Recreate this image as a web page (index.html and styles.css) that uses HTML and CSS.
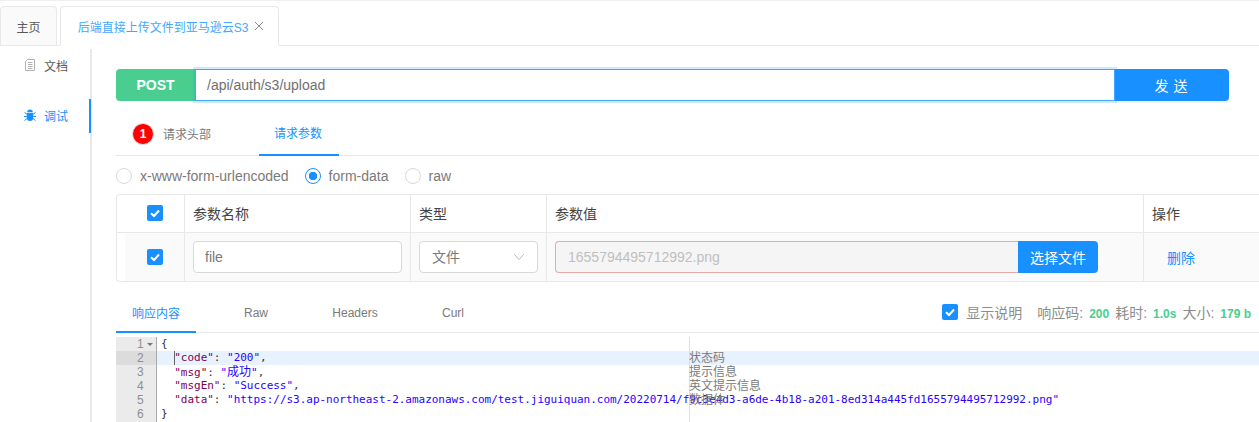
FILE: index.html
```html
<!DOCTYPE html>
<html lang="zh">
<head>
<meta charset="utf-8">
<title>后端直接上传文件到亚马逊云S3</title>
<link rel="stylesheet" href="styles.css">
</head>
<body>
<header class="tabbar">
  <div class="page-tab">主页</div>
  <div class="page-tab active"><span>后端直接上传文件到亚马逊云S3</span>
    <svg class="close" viewBox="0 0 10 10" width="10" height="10"><path d="M1 1l8 8M9 1l-8 8" stroke="#888" stroke-width="1" fill="none"/></svg>
  </div>
</header>
<div class="layout">
  <nav class="side">
    <div class="side-item">
      <svg viewBox="0 0 10 12" width="10" height="12"><path d="M2.500.5h7v11h-9v-9zM3 3.500h4.500M3 5.500h4.500M3 7.500h4.500M3 9.500h4.500" fill="none" stroke="#b0b0b0" stroke-width="1"/></svg>
      <span>文档</span>
    </div>
    <div class="side-item current">
      <svg viewBox="0 0 12 12" width="12" height="12"><path d="M3.200 3.200a2.800 2.700 0 0 1 5.600 0z" fill="#1890ff"/><path d="M2.800 4h6.400v4.500a3.200 3.500 0 0 1-6.400 0z" fill="#1890ff"/><path d="M.5 3.500l2.300 1.500M11.500 3.500L9.200 5M0 7.500h2.800M12 7.500H9.200M.5 11.500l2.500-2M11.500 11.500l-2.500-2" stroke="#1890ff" stroke-width="1" fill="none"/></svg>
      <span>调试</span>
    </div>
  </nav>
  <main class="main">
    <div class="urlbar">
      <div class="method">POST</div>
      <div class="url">/api/auth/s3/upload</div>
      <button class="send">发 送</button>
    </div>

    <div class="tabs req-tabs">
      <div class="tab first"><span class="badge">1</span>请求头部</div>
      <div class="tab on">请求参数</div>
    </div>

    <div class="radios">
      <label class="radio"><i class="dot"></i>x-www-form-urlencoded</label>
      <label class="radio"><i class="dot sel"></i>form-data</label>
      <label class="radio"><i class="dot"></i>raw</label>
    </div>

    <div class="table">
      <div class="row head">
        <div class="cell c0"><i class="check"><svg viewBox="0 0 16 16" width="16" height="16"><path d="M4 8.200l3 2.800 5-5.500" fill="none" stroke="#fff" stroke-width="2"/></svg></i></div>
        <div class="cell c1">参数名称</div>
        <div class="cell c2">类型</div>
        <div class="cell c3">参数值</div>
        <div class="cell c4">操作</div>
      </div>
      <div class="row body">
        <div class="cell c0"><i class="check"><svg viewBox="0 0 16 16" width="16" height="16"><path d="M4 8.200l3 2.800 5-5.500" fill="none" stroke="#fff" stroke-width="2"/></svg></i></div>
        <div class="cell c1"><div class="field">file</div></div>
        <div class="cell c2"><div class="field select">文件
          <svg viewBox="0 0 12 8" width="12" height="8"><path d="M1 1l5 5.500L11 1" fill="none" stroke="#bbb" stroke-width="1"/></svg></div></div>
        <div class="cell c3"><div class="upload"><div class="filename">1655794495712992.png</div><button class="pick">选择文件</button></div></div>
        <div class="cell c4"><a class="del">删除</a></div>
      </div>
    </div>

    <div class="tabs res-tabs">
      <div class="tab on">响应内容</div>
      <div class="tab">Raw</div>
      <div class="tab">Headers</div>
      <div class="tab">Curl</div>
      <div class="stats">
        <i class="check"><svg viewBox="0 0 16 16" width="16" height="16"><path d="M4 8.200l3 2.800 5-5.500" fill="none" stroke="#fff" stroke-width="2"/></svg></i>
        <span class="show">显示说明</span>
        <span>响应码:</span><b>200</b><span>耗时:</span><b>1.0s</b><span>大小:</span><b>179 b</b>
      </div>
    </div>

    <div class="editor">
      <div class="gutter">
        <div class="num">1<i class="fold"></i></div>
        <div class="num cur">2</div>
        <div class="num">3</div>
        <div class="num">4</div>
        <div class="num">5</div>
        <div class="num">6</div>
      </div>
      <div class="code">
        <div class="ln">{</div>
        <div class="ln hl">  <i class="caret"></i><s>"code"</s>: <u>"200"</u>,</div>
        <div class="ln">  <s>"msg"</s>: <u>"<em>成功</em>"</u>,</div>
        <div class="ln">  <s>"msgEn"</s>: <u>"Success"</u>,</div>
        <div class="ln">  <s>"data"</s>: <u>"https://s3.ap-northeast-2.amazonaws.com/test.jiguiquan.com/20220714/f9c3e4d3-a6de-4b18-a201-8ed314a445fd1655794495712992.png"</u></div>
        <div class="ln">}</div>
      </div>
      <div class="notes">
        <div>状态码</div>
        <div>提示信息</div>
        <div>英文提示信息</div>
        <div>数据体</div>
      </div>
    </div>
  </main>
</div>
</body>
</html>
```

FILE: styles.css
```css
* { box-sizing: border-box; }
html, body { margin: 0; height: 100%; overflow: hidden; }
body {
  background: #fff;
  color: #595959;
  font: 12px "Liberation Sans", "Noto Sans CJK SC", sans-serif;
}
i, em { font-style: normal; }

.tabbar {
  height: 46px;
  border-top: 1px solid #f0f0f0;
  border-bottom: 1px solid #e8e8e8;
  padding-top: 5px;
  display: flex;
  gap: 3px;
}
.page-tab {
  height: 40px;
  width: 57px;
  background: #fafafa;
  border: 1px solid #e8e8e8;
  border-radius: 4px 4px 0 0;
  display: flex;
  align-items: center;
  justify-content: center;
  color: #595959;
}
.page-tab.active {
  width: 219px;
  background: #fff;
  border-bottom-color: #fff;
  color: #40a9ff;
  gap: 6px;
  padding-left: 3px;
}
.layout { display: flex; height: 376px; }

.side {
  width: 92px;
  margin-top: 3px;
  border-right: 2px solid #e8e8e8;
  flex: none;
}
.side-item {
  height: 34px;
  margin-right: -1px;
  display: flex;
  align-items: center;
  padding: 0 0 2px 25px;
  gap: 9px;
  color: #595959;
  margin-bottom: 16px;
}
.side-item span { width: 30px; }
.side-item.current {
  color: #1890ff;
  border-right: 2px solid #1890ff;
  padding-left: 24px;
  gap: 8px;
}

.main { flex: 1; min-width: 0; padding: 23px 0 0 24px; }
.urlbar { display: flex; height: 32px; width: 1113px; }
.method {
  width: 79px;
  background: #49ce8f;
  color: #fff;
  font-size: 14px;
  font-weight: 700;
  border-radius: 4px 0 0 4px;
  display: flex;
  align-items: center;
  justify-content: center;
}
.url {
  flex: 1;
  border: 1px solid #40a9ff;
  box-shadow: 0 0 0 2px rgba(24, 144, 255, .2);
  font-size: 14px;
  color: #707070;
  padding-left: 11px;
  line-height: 30px;
  position: relative;
  z-index: 1;
}
.send {
  width: 114px;
  border: 0;
  background: #1890ff;
  color: #fff;
  font: 14px "Liberation Sans", "Noto Sans CJK SC", sans-serif;
  border-radius: 0 4px 4px 0;
  box-shadow: 0 2px 0 rgba(0, 0, 0, .045);
  word-spacing: 1px;
  padding: 0 8px 0 6px;
}

.tabs { display: flex; border-bottom: 1px solid #e8e8e8; }
.tab {
  display: flex;
  align-items: center;
  justify-content: center;
  color: #7a7a7a;
  margin-bottom: -1px;
}
.tab.on { color: #1890ff; border-bottom: 2px solid #1890ff; }

.req-tabs { margin-top: 14px; height: 41px; }
.req-tabs .tab { height: 41px; padding-bottom: 4px; }
.req-tabs .first { width: 143px; justify-content: flex-start; padding-left: 16px; gap: 9px; }
.req-tabs .on { width: 80px; padding-right: 2px; }
.badge {
  width: 22px;
  height: 22px;
  border-radius: 50%;
  background: #f00;
  border: 1px solid #ddd;
  color: #fff;
  font-size: 12px;
  font-weight: 700;
  display: flex;
  align-items: center;
  justify-content: center;
}

.radios {
  height: 38px;
  display: flex;
  align-items: center;
  gap: 16px;
  font-size: 14px;
  color: #7a7a7a;
  padding-top: 1px;
}
.radio { display: flex; align-items: center; gap: 8px; }
.dot {
  width: 16px;
  height: 16px;
  border: 1px solid #d9d9d9;
  border-radius: 50%;
  display: block;
}
.dot.sel {
  border-color: #1890ff;
  background: radial-gradient(circle, #1890ff 0 4px, #fff 4.500px);
}

.table {
  border: 1px solid #e8e8e8;
  border-right: 0;
  border-radius: 4px 0 0 4px;
  height: 88px;
  color: #444;
}
.row { display: flex; }
.head { height: 38px; border-bottom: 1px solid #e8e8e8; }
.body { height: 48px; color: #7a7a7a; }
.cell {
  display: flex;
  align-items: center;
  padding-left: 8px;
  border-right: 1px solid #e8e8e8;
  font-size: 14px;
  flex: none;
}
.body .cell { background: #fafafa; }
.head .cell { padding: 0 0 2px 8px; }
.c1 { width: 226px; }
.c2 { width: 136px; }
.c3 { width: 597px; }
.c4 { width: 116px; border-right: 0; }
.head .c0 { width: 68px; padding-left: 30px; }
.body .c0 { width: 60px; margin-left: 8px; padding-left: 22px; }
.check {
  width: 16px;
  height: 16px;
  background: #1890ff;
  border-radius: 2px;
  display: block;
  flex: none;
}
.check svg { display: block; }
.field {
  height: 32px;
  border: 1px solid #d9d9d9;
  border-radius: 4px;
  background: #fff;
  font-size: 14px;
  color: #7a7a7a;
  padding-left: 11px;
  line-height: 30px;
}
.c1 .field { width: 209px; }
.select { width: 119px; display: flex; align-items: center; justify-content: space-between; padding: 0 12px; }
.upload { display: flex; width: 543px; height: 32px; }
.filename {
  flex: 1;
  background: #f5f5f5;
  border: 1px solid #e8a9a9;
  border-right: 0;
  border-radius: 4px 0 0 4px;
  color: #bfbfbf;
  font-size: 14px;
  line-height: 30px;
  padding-left: 12px;
}
.pick {
  width: 80px;
  background: #1890ff;
  color: #fff;
  border: 0;
  border-radius: 0 4px 4px 0;
  font: 14px "Liberation Sans", "Noto Sans CJK SC", sans-serif;
  padding: 0;
}
.c4 .del { color: #1890ff; margin-left: 15px; }

.res-tabs { margin-top: 13px; height: 38px; }
.res-tabs .tab { height: 38px; width: 80px; padding-bottom: 2px; }
.res-tabs .tab:nth-child(2) { width: 120px; }
.res-tabs .tab:nth-child(3) { width: 62px; margin-left: 8px; }
.res-tabs .tab:nth-child(4) { width: 38px; margin-left: 48px; }
.stats {
  margin-left: auto;
  display: flex;
  align-items: center;
  gap: 6px;
  padding: 0 8px 4px 0;
  color: #8c8c8c;
  font-size: 14px;
}
.stats b { color: #49ce8f; font-size: 12px; padding-top: 4px; }
.stats .show { margin: 0 9px 0 2px; }

.editor {
  position: relative;
  margin-top: 4px;
  display: flex;
  height: 85px;
  font: 11px/14px "DejaVu Sans Mono", "Noto Sans CJK SC", monospace;
  overflow: hidden;
}
.gutter { width: 41px; background: #ebebeb; border-right: 1px solid #aaa; flex: none; color: #8f8f8f; }
.num { height: 14px; padding-left: 21px; position: relative; font-family: "Liberation Sans", sans-serif; font-size: 12px; }
.num.cur { background: #dcdcdc; }
.fold {
  position: absolute;
  left: 31px;
  top: 6px;
  border: 3px solid transparent;
  border-top: 3px solid #777;
}
.code { flex: 1; min-width: 0; color: #333; }
.ln { height: 14px; white-space: pre; padding-left: 4px; position: relative; letter-spacing: -.02px; }
.ln.hl { background: #e8f2ff; }
.ln s { color: #7f0055; text-decoration: none; }
.ln u { color: #2a00ff; text-decoration: none; }
.ln em { font-size: 12px; }
.caret { position: absolute; left: 17px; top: 0; width: 1px; height: 14px; background: #666; }
.notes {
  position: absolute;
  left: 573px;
  top: 0;
  bottom: 0;
  right: 0;
  border-left: 1px solid #e0e0e0;
  padding-top: 13px;
  font: 12px/14px "Noto Sans CJK SC", sans-serif;
  color: #7a7a7a;
}
.notes div { height: 14px; margin-left: -1px; }
```
